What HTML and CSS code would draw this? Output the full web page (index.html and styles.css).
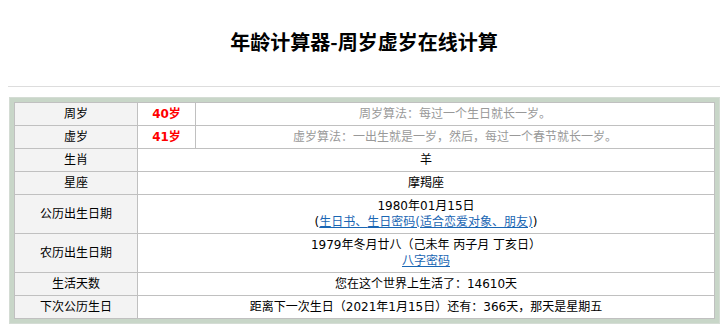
FILE: index.html
```html
<!DOCTYPE html>
<html lang="zh-CN">
<head>
    <meta charset="UTF-8">
    <meta name="viewport" content="width=device-width, initial-scale=1.0">
    <title>年龄计算器-周岁虚岁在线计算</title>
    <link rel="stylesheet" href="styles.css">
</head>
<body>
    <div class="page">
        <h1 class="title">年龄计算器-周岁虚岁在线计算</h1>

        <div class="result-box">
            <table class="result">
                <colgroup>
                    <col class="col-label">
                    <col class="col-age">
                    <col>
                </colgroup>
                <tr>
                    <td class="label">周岁</td>
                    <td class="age">40岁</td>
                    <td class="note">周岁算法：每过一个生日就长一岁。</td>
                </tr>
                <tr>
                    <td class="label">虚岁</td>
                    <td class="age">41岁</td>
                    <td class="note">虚岁算法：一出生就是一岁，然后，每过一个春节就长一岁。</td>
                </tr>
                <tr>
                    <td class="label">生肖</td>
                    <td colspan="2">羊</td>
                </tr>
                <tr>
                    <td class="label">星座</td>
                    <td colspan="2">摩羯座</td>
                </tr>
                <tr>
                    <td class="label">公历出生日期</td>
                    <td colspan="2">
                        1980年01月15日<br>
                        (<a href="#">生日书、</a><a href="#">生日密码(适合恋爱对象、朋友)</a>)
                    </td>
                </tr>
                <tr>
                    <td class="label">农历出生日期</td>
                    <td colspan="2">
                        1979年冬月廿八（己未年 丙子月 丁亥日）<br>
                        <a href="#">八字密码</a>
                    </td>
                </tr>
                <tr>
                    <td class="label">生活天数</td>
                    <td colspan="2">您在这个世界上生活了：14610天</td>
                </tr>
                <tr>
                    <td class="label">下次公历生日</td>
                    <td colspan="2">距离下一次生日（2021年1月15日）还有：366天，那天是星期五</td>
                </tr>
            </table>
        </div>
    </div>
</body>
</html>
```

FILE: styles.css
```css
body {
    margin: 0;
    background-color: #fff;
    font-family: "DejaVu Sans", "Noto Sans CJK SC", sans-serif;
    font-size: 12px;
    color: #000;
}
.page {
    padding: 0 4px 0 8px;
}
.title {
    margin: 0;
    padding: 28px 0 0;
    height: 58px;
    border-bottom: 1px solid #dddddd;
    text-align: center;
    font-family: "Noto Sans CJK SC", sans-serif;
    font-size: 20px;
    line-height: 28px;
    font-weight: bold;
}
.result-box {
    margin: 10px 0 0 1px;
    padding: 4px;
    background-color: #c8d6c8;
    border: 1px solid #d4dcd4;
    width: 701px;
}
.result {
    width: 100%;
    table-layout: fixed;
    border-collapse: collapse;
    background-color: #fff;
}
.col-label {
    width: 123px;
}
.col-age {
    width: 58px;
}
.result td {
    border: 1px solid #c0c0c0;
    padding: 3px 4px;
    line-height: 16px;
    text-align: center;
    vertical-align: middle;
}
.result .label {
    background-color: #f3f3f3;
}
.result .age {
    color: #ff0000;
    font-weight: bold;
}
.result .note {
    color: #999999;
}
.result a {
    color: #1a66b3;
    text-decoration: underline;
}
```
